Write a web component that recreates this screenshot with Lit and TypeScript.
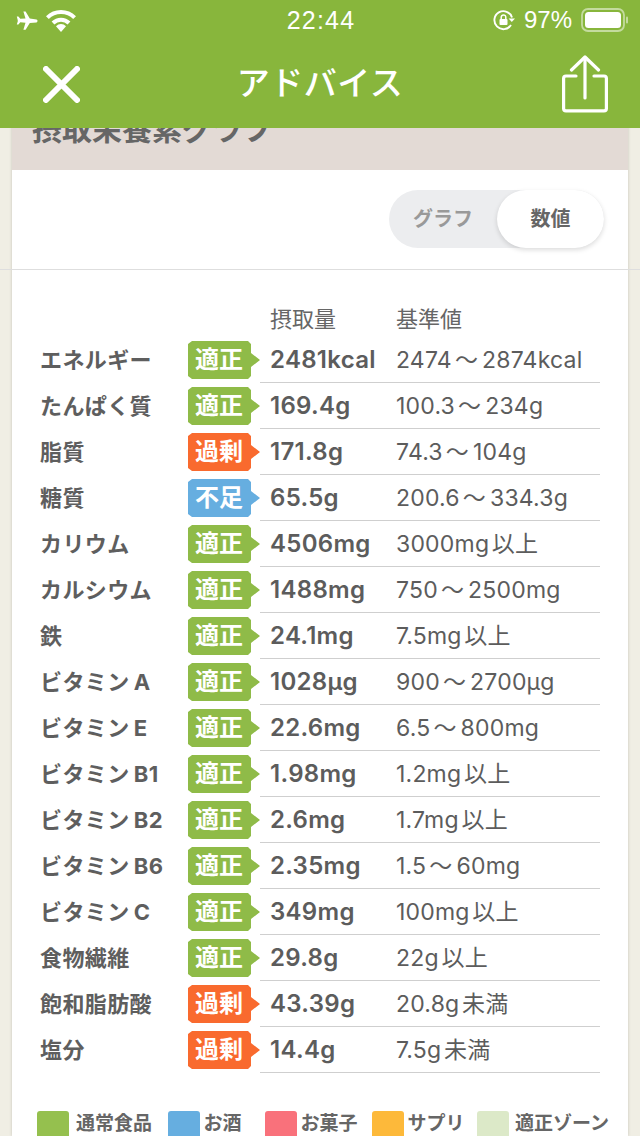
import { LitElement, html, css } from "lit";
import { customElement } from "lit/decorators.js";

type St = "ok" | "over" | "under";
const rows: [string, St, string, string][] = [
  ["エネルギー", "ok", "2481kcal", "2474～2874kcal"],
  ["たんぱく質", "ok", "169.4g", "100.3～234g"],
  ["脂質", "over", "171.8g", "74.3～104g"],
  ["糖質", "under", "65.5g", "200.6～334.3g"],
  ["カリウム", "ok", "4506mg", "3000mg 以上"],
  ["カルシウム", "ok", "1488mg", "750～2500mg"],
  ["鉄", "ok", "24.1mg", "7.5mg 以上"],
  ["ビタミン A", "ok", "1028µg", "900～2700µg"],
  ["ビタミン E", "ok", "22.6mg", "6.5～800mg"],
  ["ビタミン B1", "ok", "1.98mg", "1.2mg 以上"],
  ["ビタミン B2", "ok", "2.6mg", "1.7mg 以上"],
  ["ビタミン B6", "ok", "2.35mg", "1.5～60mg"],
  ["ビタミン C", "ok", "349mg", "100mg 以上"],
  ["食物繊維", "ok", "29.8g", "22g 以上"],
  ["飽和脂肪酸", "over", "43.39g", "20.8g 未満"],
  ["塩分", "over", "14.4g", "7.5g 未満"],
];
const labels: Record<St, string> = { ok: "適正", over: "過剰", under: "不足" };
const legend: [string, string, string][] = [
  ["通常食品", "#95c04e", "l1"],
  ["お酒", "#66aee0", "l2"],
  ["お菓子", "#f9717b", "l3"],
  ["サプリ", "#fdb93a", "l4"],
  ["適正ゾーン", "#dce9c8", "l5"],
];

@customElement("app-root")
export class AppRoot extends LitElement {
  static styles = css`
    :host {
      display: block;
      width: 640px;
      height: 1136px;
      overflow: hidden;
      position: relative;
      background: #f0eee4;
      font-family: Inter, "Noto Sans CJK JP", sans-serif;
      color: #5c5c5c;
    }
    .top {
      position: absolute;
      inset: 0 0 auto 0;
      height: 128px;
      background: #88b63c;
      color: #fff;
      z-index: 2;
    }
    .status {
      height: 40px;
      display: grid;
      grid-template-columns: 1fr auto 1fr;
      align-items: center;
      padding: 0 12px 0 14px;
      font-size: 24px;
      line-height: 40px;
      font-family: "Liberation Sans", sans-serif;
    }
    .s-left { display: flex; align-items: center; gap: 7px; }
    .s-right { display: flex; align-items: center; justify-content: flex-end; gap: 9px; }
    .time { font-size: 25px; letter-spacing: 1.2px; }
    .nav {
      height: 88px;
      display: flex;
      align-items: center;
      justify-content: space-between;
      padding: 0 32px 0 43px;
      position: relative;
    }
    .nav-title {
      font-size: 33px;
      font-weight: 500;
      letter-spacing: 0.5px;
      line-height: 88px;
      position: absolute;
      left: 0;
      right: 0;
      top: -1px;
      text-align: center;
    }
    .card {
      margin: 0 12px;
      padding-top: 128px;
      background: #fff;
      height: 1008px;
      box-shadow: 0 0 3px rgba(0, 0, 0, 0.18);
    }
    .band {
      height: 42px;
      background: #e3dad5;
      overflow: hidden;
      padding-left: 20px;
      font-size: 30px;
      font-weight: 700;
      color: #666;
      line-height: 36px;
    }
    .band span { display: block; margin-top: -17px; white-space: nowrap; }
    .toggle-row {
      height: 100px;
      border-bottom: 1px solid #dedede;
      margin: 0 -12px;
      padding: 20px 36px 0 0;
      box-sizing: border-box;
      display: flex;
      justify-content: flex-end;
      align-items: flex-start;
    }
    .toggle {
      width: 215px;
      height: 58px;
      border-radius: 29px;
      background: #ecedef;
      display: flex;
      font-size: 20px;
      font-weight: 700;
      line-height: 58px;
      text-align: center;
      color: #999;
    }
    .toggle div { flex: 1; }
    .toggle .on {
      flex: 0 0 107px;
      background: #fff;
      color: #666;
      border-radius: 29px;
      box-shadow: 0 2px 5px rgba(0, 0, 0, 0.14);
    }
    .table { padding: 31px 28px 0 0; }
    .grid {
      display: grid;
      grid-template-columns: 176px 72px 136px 1fr;
    }
    .head {
      height: 36px;
      line-height: 36px;
      font-size: 22px;
      color: #666;
    }
    .head .v { grid-column: 3; padding-left: 10px; }
    .row { height: 46px; align-items: center; }
    .name {
      padding: 0 0 5px 28px;
      font-size: 22px;
      font-weight: 700;
      letter-spacing: 0.4px;
      color: #5e5e5e;
      white-space: nowrap;
      word-spacing: -1.5px;
    }
    .badge {
      width: 72px;
      height: 38px;
      box-sizing: border-box;
      color: #fff;
      font-size: 24px;
      font-weight: 700;
      line-height: 38px;
      padding-left: 7px;
      clip-path: polygon(4px 0, 60px 0, 63px 3px, 63px 12px, 72px 19px, 63px 26px, 63px 35px, 60px 38px, 4px 38px, 0 35px, 0 3px);
    }
    .ok { background: #8fbb48; }
    .over { background: #f96a2e; }
    .under { background: #66aee0; }
    .val, .ref {
      height: 46px;
      line-height: 46px;
      border-bottom: 1px solid #cfcfcf;
      box-sizing: border-box;
      white-space: nowrap;
      color: #5c5c5c;
    }
    .val {
      padding-left: 10px;
      font-size: 24px;
      font-weight: 600;
      letter-spacing: 0.3px;
    }
    .ref {
      font-size: 23px;
      letter-spacing: 0.2px;
      word-spacing: -4px;
    }
    .tilde { margin: 0 4px 0 3px; }
    .legend {
      display: flex;
      margin: 38px -28px 0 0;
      padding-left: 25px;
      font-size: 19px;
      font-weight: 700;
      color: #666;
    }
    .li { display: flex; flex: none; gap: 3.5px; line-height: 26px; white-space: nowrap; }
    .sq { width: 32px; height: 32px; border-radius: 3px; }
    .l1 { width: 131px; gap: 7px; }
    .l2 { width: 97px; }
    .l3 { width: 107px; }
    .l4 { width: 105px; }
    .l5 { gap: 6px; }
  `;

  private ref(r: string) {
    const p = r.split("～");
    return p.length === 2 ? html`${p[0]}<span class="tilde">～</span>${p[1]}` : r;
  }

  render() {
    return html`
      <div class="top">
        <div class="status">
          <div class="s-left">
            <svg width="24" height="24" viewBox="0 0 24 24" fill="#fff"><path d="M13.6 2.5c.3-1.4 2.6-1.4 2.9 0l.4 6.7 6.8 4.2v2.2l-7-2.1-.5 5.2 2.3 1.9v1.6l-3.3-1-1.3.1-3.3.9v-1.600l2.2-1.9-.3-5.2-7 2.1v-2.2l6.9-4.2z" transform="rotate(90 13 12) translate(-1 0)"/></svg>
            <svg width="32" height="24" viewBox="0 0 32 24" fill="none" stroke="#fff" stroke-width="4"><path d="M2.400 9.600a19.500 19.500 0 0 1 27.200 0"/><path d="M8 15a11.500 11.500 0 0 1 16 0"/><path fill="#fff" stroke="none" d="M16 24l-5-5.800a7 7 0 0 1 10 0z"/></svg>
          </div>
          <div class="time">22:44</div>
          <div class="s-right">
            <svg width="22" height="22" viewBox="0 0 22 22" fill="none" stroke="#fff" stroke-width="1.900"><path d="M18 16A9 9 0 1 1 19 8.500"/><path fill="#fff" stroke="none" d="M15.600 9.500h6.400l-3.200 3.600z"/><rect x="6.500" y="10" width="8" height="6" rx="1" fill="#fff" stroke="none"/><path stroke-width="1.500" d="M8.200 10.500V8.200a2.300 2.300 0 0 1 4.600 0v2.300"/></svg>
            <span>97%</span>
            <svg width="47" height="24" viewBox="0 0 47 24"><rect x="1" y="1" width="42" height="22" rx="6" fill="none" stroke="#fff" stroke-opacity=".5" stroke-width="1.800"/><rect x="4" y="4" width="36" height="16" rx="3.500" fill="#fff"/><rect x="45" y="8.500" width="2" height="7" rx="1" fill="#fff" fill-opacity=".5"/></svg>
          </div>
        </div>
        <div class="nav">
          <svg width="37" height="37" viewBox="0 0 37 37" stroke="#fff" stroke-width="6" stroke-linecap="round"><path d="M3 3 34 34M34 3 3 34"/></svg>
          <div class="nav-title">アドバイス</div>
          <svg width="46" height="58" viewBox="0 0 46 58" fill="none" stroke="#fff" stroke-width="3.200" stroke-linecap="round" stroke-linejoin="round"><path d="M14 21H4a2.400 2.400 0 0 0-2.400 2.400v30a2.400 2.400 0 0 0 2.400 2.400h38a2.400 2.400 0 0 0 2.400-2.400v-30A2.400 2.400 0 0 0 42 21H32"/><path d="M23 43V3"/><path d="M9.500 15 23 2 36.500 15"/></svg>
        </div>
      </div>
      <div class="card">
        <div class="band"><span>摂取栄養素グラフ</span></div>
        <div class="toggle-row">
          <div class="toggle">
            <div>グラフ</div>
            <div class="on">数値</div>
          </div>
        </div>
        <div class="table">
          <div class="grid head">
            <div class="v">摂取量</div>
            <div>基準値</div>
          </div>
          ${rows.map(
            ([n, s, v, r]) => html`<div class="grid row">
              <div class="name">${n}</div>
              <div class="badge ${s}">${labels[s]}</div>
              <div class="val">${v}</div>
              <div class="ref">${this.ref(r)}</div>
            </div>`
          )}
          <div class="legend">
            ${legend.map(
              ([t, c, k]) => html`<div class="li ${k}">
                <div class="sq" style="background:${c}"></div>
                <span>${t}</span>
              </div>`
            )}
          </div>
        </div>
      </div>
    `;
  }
}
